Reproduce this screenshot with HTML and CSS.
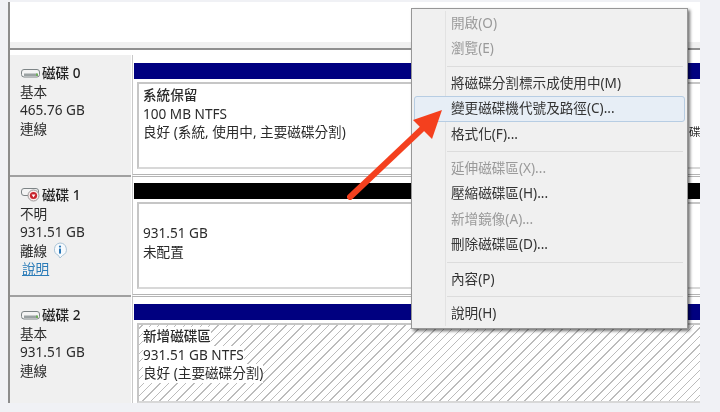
FILE: index.html
```html
<!DOCTYPE html>
<html lang="zh-Hant">
<head>
    <meta charset="UTF-8">
    <meta name="viewport" content="width=device-width, initial-scale=1.0">
    <title>磁碟管理</title>
    <link rel="stylesheet" href="styles.css">
</head>
<body>

<div class="window">
    <div class="top-panel"></div>
    <div class="top-band"></div>

    <div class="disk disk-0">
        <div class="disk-info">
            <div class="disk-name">
                <svg class="drive" width="20" height="10" viewBox="0 0 20 10">
                    <rect x="0.5" y="1.5" width="18" height="7.5" rx="2.5" fill="#f4f4f4" stroke="#7d8486"/>
                    <rect x="3" y="5.5" width="13" height="2.5" fill="#9aa1a2"/>
                    <rect x="15" y="5.5" width="2" height="2.5" fill="#6fae5c"/>
                </svg>
                <span>磁碟 0</span>
            </div>
            <div>基本</div>
            <div>465.76 GB</div>
            <div>連線</div>
        </div>
        <div class="disk-map">
            <div class="bar bar-navy"></div>
            <div class="parts">
                <div class="part part-system">
                    <div class="part-title">系統保留</div>
                    <div>100 MB NTFS</div>
                    <div>良好 (系統, 使用中, 主要磁碟分割)</div>
                </div>
                <div class="part part-main">
                    <div>碟</div>
                </div>
            </div>
        </div>
    </div>

    <div class="disk disk-1">
        <div class="disk-info">
            <div class="disk-name">
                <svg class="drive" width="20" height="14" viewBox="0 0 20 14">
                    <rect x="0.5" y="0.5" width="17" height="7" rx="2.5" fill="#f4f4f4" stroke="#7d8486"/>
                    <circle cx="12.5" cy="7.5" r="5.5" fill="#fbeaea" stroke="#9a9a9a"/>
                    <circle cx="12.5" cy="7.5" r="3.6" fill="#c8232c"/>
                    <path d="M10.6 6.6h3.8l-1.9 2.8z" fill="#fff"/>
                </svg>
                <span>磁碟 1</span>
            </div>
            <div>不明</div>
            <div>931.51 GB</div>
            <div class="offline">離線
                <svg class="info" width="16" height="17" viewBox="0 0 16 17">
                    <path d="M8 1a6.5 6.5 0 0 1 2.6 12.4L8 16l-1.6-2.6A6.5 6.5 0 0 1 8 1z" fill="#f6fafd" stroke="#a9c3d6"/>
                    <circle cx="8" cy="4.6" r="1.1" fill="#2a78b8"/>
                    <rect x="7" y="6.6" width="2" height="5" fill="#2a78b8"/>
                </svg>
            </div>
            <div><a class="help-link" href="#">說明</a></div>
        </div>
        <div class="disk-map">
            <div class="bar bar-black"></div>
            <div class="parts">
                <div class="part part-free">
                    <div>931.51 GB</div>
                    <div>未配置</div>
                </div>
            </div>
        </div>
    </div>

    <div class="disk disk-2">
        <div class="disk-info">
            <div class="disk-name">
                <svg class="drive" width="20" height="10" viewBox="0 0 20 10">
                    <rect x="0.5" y="1.5" width="18" height="7.5" rx="2.5" fill="#f4f4f4" stroke="#7d8486"/>
                    <rect x="3" y="5.5" width="13" height="2.5" fill="#9aa1a2"/>
                    <rect x="15" y="5.5" width="2" height="2.5" fill="#6fae5c"/>
                </svg>
                <span>磁碟 2</span>
            </div>
            <div>基本</div>
            <div>931.51 GB</div>
            <div>連線</div>
        </div>
        <div class="disk-map">
            <div class="bar bar-navy"></div>
            <div class="parts">
                <div class="part part-hatch">
                    <div class="part-title">新增磁碟區</div>
                    <div>931.51 GB NTFS</div>
                    <div>良好 (主要磁碟分割)</div>
                </div>
            </div>
        </div>
    </div>
</div>

<ul class="menu">
    <li class="item disabled">開啟(O)</li>
    <li class="item disabled">瀏覽(E)</li>
    <li class="sep"></li>
    <li class="item">將磁碟分割標示成使用中(M)</li>
    <li class="item hover">變更磁碟機代號及路徑(C)...</li>
    <li class="item">格式化(F)...</li>
    <li class="sep"></li>
    <li class="item disabled">延伸磁碟區(X)...</li>
    <li class="item">壓縮磁碟區(H)...</li>
    <li class="item disabled">新增鏡像(A)...</li>
    <li class="item">刪除磁碟區(D)...</li>
    <li class="sep"></li>
    <li class="item">內容(P)</li>
    <li class="sep"></li>
    <li class="item">說明(H)</li>
</ul>

<svg class="arrow" width="110" height="100" viewBox="340 105 110 100">
    <line x1="350" y1="197" x2="424" y2="127" stroke="#f4401e" stroke-width="6" stroke-linecap="round"/>
    <polygon points="442,110 413,120 432,139" fill="#f4401e"/>
</svg>

</body>
</html>
```

FILE: styles.css
```css
html, body {
    margin: 0;
    padding: 0;
}
body {
    width: 720px;
    height: 412px;
    overflow: hidden;
    background-color: #f0f1f5;
    font-family: "Noto Sans", "Noto Sans CJK TC", sans-serif;
    font-size: 13.6px;
    color: #2b2b2b;
}
.window, .menu, .arrow {
    filter: blur(0.35px);
}
.window {
    width: 690px;
    height: 401px;
    margin: 2px 0 0 8px;
    border-left: 2px solid #8c8c8c;
    background-color: #fff;
    overflow: hidden;
}
.top-panel {
    height: 40px;
    background-color: #fff;
}
.top-band {
    height: 6px;
    background-color: #f0f0f0;
    border-bottom: 2px solid #8f8f8f;
    margin-bottom: 5px;
}
.disk {
    display: grid;
    grid-template-columns: 121px 1fr;
    column-gap: 1px;
}
.disk-0 {
    height: 122px;
}
.disk-1 {
    height: 120px;
}
.disk-2 {
    height: 106px;
}
.disk-info {
    background-color: #f0f0f0;
    border-bottom: 2px solid #a0a0a0;
    line-height: 18.5px;
    padding: 9px 0 0 10px;
    box-sizing: border-box;
}
.disk-2 .disk-info {
    border-bottom: none;
}
.disk-name {
    display: flex;
    align-items: center;
    gap: 1px;
    font-weight: 500;
    color: #222;
    margin-left: 1px;
}
.offline {
    display: flex;
    align-items: center;
    gap: 5px;
}
.help-link {
    color: #2c7cb8;
    margin-left: 2px;
}
.disk-map {
    border-left: 1px solid #c8c8c8;
    border-bottom: 3px double #b4b4b4;
    box-sizing: border-box;
    padding-top: 8px;
    padding-left: 1px;
    display: flex;
    flex-direction: column;
}
.disk-1 .disk-map {
    padding-top: 6px;
}
.disk-2 .disk-map {
    padding-top: 7px;
    border-bottom: none;
}
.bar {
    height: 16px;
    flex: none;
}
.bar-navy {
    background-color: #000080;
}
.bar-black {
    background-color: #000;
}
.parts {
    flex: 1;
    display: flex;
    gap: 4px;
    padding: 3px 0 5px 3px;
    min-height: 0;
    background-color: #fff;
    overflow: hidden;
}
.disk-2 .parts {
    padding-bottom: 0;
}
.part {
    border: 2px solid #c6c6c6;
    border-right-color: #d8d8d8;
    border-bottom-color: #d8d8d8;
    box-sizing: border-box;
    line-height: 18.5px;
    padding: 2px 4px;
    white-space: nowrap;
}
.part-title {
    font-weight: 500;
}
.part-system {
    width: 535px;
    flex: none;
}
.part-main {
    flex: 1;
    padding: 39px 0 0 11px;
    font-size: 11.5px;
    overflow: hidden;
    border-right: none;
}
.part-free {
    flex: 1;
    padding-top: 20px;
    margin-right: -4px;
}
.part-hatch {
    flex: 1;
    margin-right: -4px;
    background: repeating-linear-gradient(-45deg, #fff 0, #fff 5px, #bcbcbc 5px, #bcbcbc 6px);
}
.part-hatch div {
    width: fit-content;
    background-color: #fff;
}
.menu {
    position: absolute;
    left: 411px;
    top: 8px;
    width: 277px;
    height: 321px;
    box-sizing: border-box;
    margin: 0;
    padding: 2px;
    list-style: none;
    background-color: #f0f0f0;
    border: 1px solid #979797;
    box-shadow: 2px 2px 3px rgba(0, 0, 0, 0.55);
    color: #333;
}
.menu::before {
    content: "";
    position: absolute;
    left: 33px;
    top: 2px;
    bottom: 2px;
    width: 1px;
    background-color: #e2e2e2;
}
.item {
    height: 25.4px;
    line-height: 23.5px;
    padding-left: 37px;
    box-sizing: border-box;
    position: relative;
    white-space: nowrap;
}
.disabled {
    color: #9a9a9a;
}
.hover {
    background-color: #e7eef6;
    outline: 1px solid #b7cde3;
    outline-offset: -1px;
    border-radius: 3px;
}
.sep {
    height: 1px;
    margin: 4px 2px 4px 33px;
    background-color: #dcdcdc;
    position: relative;
}
.arrow {
    position: absolute;
    left: 340px;
    top: 105px;
}
```
